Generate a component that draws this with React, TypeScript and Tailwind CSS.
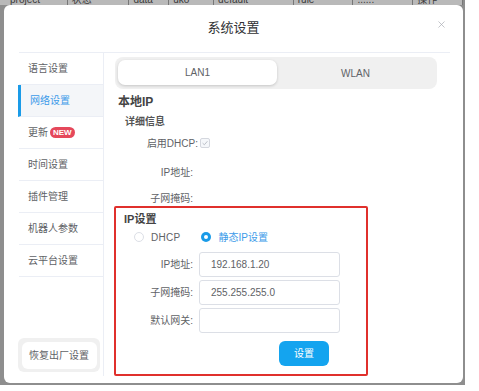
import { X } from "lucide-react";

const MENU = ["语言设置", "网络设置", "更新", "时间设置", "插件管理", "机器人参数", "云平台设置"];

const HEAD = [
  { t: "project", w: "w-[62px]" },
  { t: "状态", w: "w-[62px]" },
  { t: "data", w: "w-[40px]" },
  { t: "uko", w: "w-[45px]" },
  { t: "default", w: "w-[80px]" },
  { t: "rule", w: "w-[60px]" },
  { t: "......", w: "w-[60px]" },
  { t: "操作", w: "w-[50px]" },
];

function FormInput({ label, value }: { label: string; value: string }) {
  return (
    <div className="flex items-center h-[25px]">
      <div className="w-[77px] text-right text-[10px] text-[#606266]">{label}</div>
      <div className="ml-[6px] w-[141px] h-[25px] border border-[#dcdfe6] rounded-[3px] flex items-center pl-[11px] text-[10px] text-[#606266]">
        {value}
      </div>
    </div>
  );
}

export default function App() {
  return (
    <div className="w-[479px] h-[391px] bg-white font-['Liberation_Sans','Noto_Sans_CJK_SC',sans-serif]">
      <div className="w-[465px] h-[385px] bg-[#8e8e8e] pl-[4px] pr-[2px] pb-[2px] flex flex-col">
        {/* table header behind the overlay */}
        <div className="h-[5px] overflow-hidden flex bg-[#b9b9b9] -ml-[4px] pl-[6px]">
          {HEAD.map((h) => (
            <div key={h.t} className={`${h.w} -mt-[6px] text-[10px] leading-[12px] text-[#3a3a3a] border-r border-[#777] pl-[4px]`}>
              {h.t}
            </div>
          ))}
        </div>

        <div className="flex-1 bg-white rounded-[6px] flex flex-col">
          {/* header */}
          <div className="relative h-[47px] flex items-center justify-center">
            <span className="text-[13px] text-[#303133] -mt-[2px]">系统设置</span>
            <X className="absolute right-[16px] top-[14px] w-[11px] h-[11px] text-[#a8abb2]" strokeWidth={1.5} />
          </div>

          <div className="ml-[15px] mr-[13px] border-t border-[#ebeef5] flex flex-1">
            {/* sidebar */}
            <div className="w-[85px] h-[323px] border-r border-[#ebeef5] flex flex-col">
              {MENU.map((m, i) => (
                <div
                  key={m}
                  className={
                    i === 1
                      ? "h-[32px] border-b border-[#ebeef5] flex items-center pl-[9px] text-[10px] text-[#3d9be9] bg-[#f4f6f9] border-l-[3px] border-l-[#1a9be8] -ml-[1px]"
                      : "h-[32px] border-b border-[#ebeef5] flex items-center pl-[9px] text-[10px] text-[#606266]"
                  }
                >
                  {m}
                  {m === "更新" && (
                    <span className="ml-[2px] h-[11px] px-[3px] rounded-full bg-[#e5485b] text-white text-[8px] font-bold leading-[11px]">
                      NEW
                    </span>
                  )}
                </div>
              ))}
              <div className="mt-auto mb-[4px] -ml-[1px] w-[82px] h-[34px] bg-[#f0f0f0] rounded-[6px] flex items-center justify-center">
                <div className="w-[75px] h-[27px] bg-white rounded-[6px] flex items-center justify-center text-[10px] text-[#606266]">
                  恢复出厂设置
                </div>
              </div>
            </div>

            {/* main */}
            <div className="flex-1 pl-[11px] flex flex-col">
              <div className="mt-[4px] w-[322px] h-[32px] bg-[#f0f0f0] rounded-[8px] p-[3px] flex">
                <div className="w-[159px] h-[25px] bg-white rounded-[7px] shadow-[0_1px_3px_rgba(0,0,0,0.18)] flex items-center justify-center text-[10px] text-[#606266]">
                  LAN1
                </div>
                <div className="flex-1 flex items-center justify-center text-[10px] text-[#606266]">WLAN</div>
              </div>

              <div className="mt-[5px] ml-[3px] text-[12px] leading-[16px] font-bold text-[#444]">本地IP</div>
              <div className="mt-[5px] ml-[10px] text-[10px] leading-[14px] font-bold text-[#555]">详细信息</div>

              <div className="mt-[4px] h-[20px] flex items-center">
                <div className="w-[83px] text-right text-[10px] text-[#606266]">启用DHCP:</div>
                <div className="ml-[2px] w-[10px] h-[10px] border border-[#d4d7de] bg-[#f5f7fa] rounded-[2px] flex items-center justify-center">
                  <svg viewBox="0 0 10 10" className="w-[8px] h-[8px]">
                    <path d="M2 5.2 L4.2 7.2 L8 2.8" fill="none" stroke="#b8bcc4" strokeWidth="1.2" />
                  </svg>
                </div>
              </div>
              <div className="mt-[9px] h-[20px] flex items-center">
                <div className="w-[78px] text-right text-[10px] text-[#606266]">IP地址:</div>
              </div>
              <div className="mt-[8px] h-[16px] flex items-center">
                <div className="w-[78px] text-right text-[10px] text-[#606266]">子网掩码:</div>
              </div>

              {/* ip settings block */}
              <div className="-ml-[1px] w-[254px] h-[170px] border-2 border-[#e0302c] rounded-[2px] flex flex-col">
                <div className="mt-[4px] ml-[8px] text-[11px] leading-[14px] font-bold text-[#444]">IP设置</div>
                <div className="mt-[3px] h-[16px] flex items-center text-[10px]">
                  <span className="ml-[18px] w-[10px] h-[10px] rounded-full border border-[#dcdfe6] bg-white" />
                  <span className="ml-[7px] text-[#606266] tracking-[0.3px]">DHCP</span>
                  <span className="ml-[20px] w-[10px] h-[10px] rounded-full bg-[#1a9be8] flex items-center justify-center">
                    <span className="w-[4px] h-[4px] rounded-full bg-white" />
                  </span>
                  <span className="ml-[8px] text-[#3d9be9]">静态IP设置</span>
                </div>
                <div className="mt-[7px] flex flex-col gap-[3px]">
                  <FormInput label="IP地址:" value="192.168.1.20" />
                  <FormInput label="子网掩码:" value="255.255.255.0" />
                  <FormInput label="默认网关:" value="" />
                </div>
                <div className="mt-[8px] ml-[163px] w-[50px] h-[25px] rounded-[6px] bg-[#14a4ef] flex items-center justify-center text-[10px] text-white">
                  设置
                </div>
              </div>
            </div>
          </div>
        </div>
      </div>
    </div>
  );
}
